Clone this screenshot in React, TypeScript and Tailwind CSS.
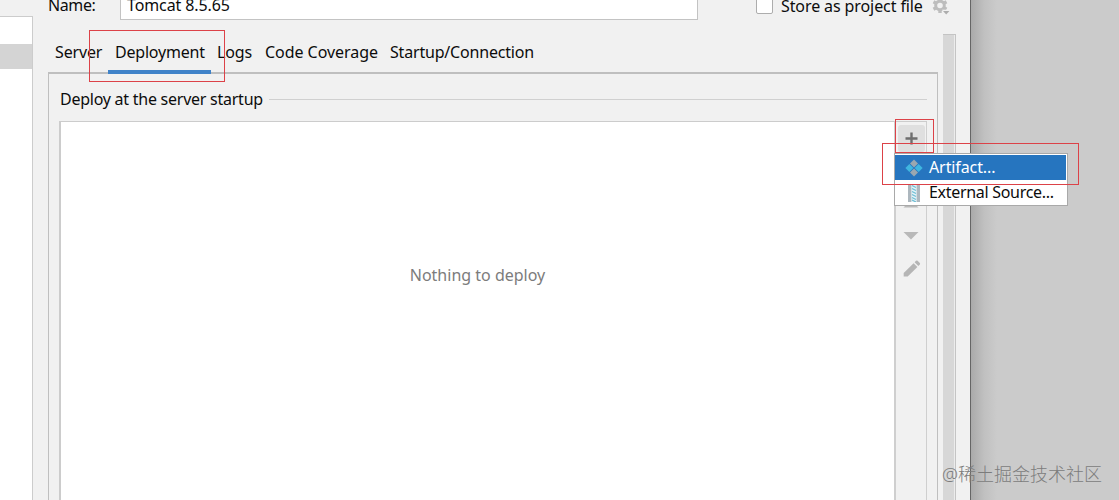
import { useState } from 'react'

type Tab = {
  label: string
  className: string
}

const TABS: Tab[] = [
  { label: 'Server', className: 'w-[60px] pl-[7px] tracking-[-0.15px]' },
  { label: 'Deployment', className: 'w-[103px] pl-[7px] tracking-[-0.2px]' },
  { label: 'Logs', className: 'w-[47px] pl-[6px] tracking-[-0.1px]' },
  { label: 'Code Coverage', className: 'w-[126px] pl-[7px] tracking-[-0.05px]' },
  { label: 'Startup/Connection', className: 'w-[160px] pl-[6px] tracking-[-0.19px]' },
]

function GearIcon() {
  return (
    <svg className="ml-[9px] mt-[-4px] h-[20px] w-[18px]" viewBox="0 0 18 20" fill="none">
      <circle cx="8" cy="9.5" r="4.3" stroke="#bdbdbd" strokeWidth="3" />
      <path
        d="M8 2v3M8 14v3M1.5 5.8l2.6 1.4M11.9 11.8l2.6 1.4M1.5 13.2l2.6-1.4M11.9 7.2l2.6-1.4"
        stroke="#bdbdbd"
        strokeWidth="3.4"
      />
      <path d="M10 13.8h8v5h-4z" fill="#f1f1f1" />
      <path d="M11 15h6.4l-3.2 3.4z" fill="#adadad" />
    </svg>
  )
}

function ArtifactIcon() {
  return (
    <svg className="h-[18px] w-[18px]" viewBox="0 0 18 18">
      <path d="M9 0.4l4 4-4 4-4-4z" fill="#9aa7b0" />
      <path d="M4.4 5l4 4-4 4-4-4z" fill="#40b6e0" />
      <path d="M13.6 5l4 4-4 4-4-4z" fill="#40b6e0" />
      <path d="M9 9.6l4 4-4 4-4-4z" fill="#9aa7b0" />
    </svg>
  )
}

function ExternalSourceIcon() {
  return (
    <svg className="h-[18px] w-[18px]" viewBox="0 0 18 18">
      <path d="M3 0h3.6v18H3zM11.4 0H15v18h-3.6z" fill="#adb7be" />
      <path d="M6.6 0h4.8v18H6.6z" fill="#e3f2f7" />
      <path
        d="M7 1.5l4 2M7 4.5l4 2M7 7.5l4 2M7 10.5l4 2M7 13.5l4 2M7 16l4 2"
        stroke="#6dbdd4"
        strokeWidth="1.3"
      />
    </svg>
  )
}

function DeployToolbar() {
  return (
    <div className="flex w-[33px] flex-col items-center border-l-2 border-r border-[#cfcfcf] bg-[#f1f1f1] pt-[3px]">
      <button className="flex h-[27px] w-[27px] items-center justify-center rounded-[3px] bg-[#dfdfdf]" aria-label="Add">
        <svg className="h-[13px] w-[13px]" viewBox="0 0 13 13">
          <path d="M6.5 0.5v12M0.5 6.5h12" stroke="#6e6e6e" strokeWidth="2.4" />
        </svg>
      </button>
      <svg className="mt-[48px] h-[8px] w-[16px]" viewBox="0 0 16 8">
        <path d="M0.5 7.5h15L8 0z" fill="#b9b9b9" />
      </svg>
      <svg className="mt-[24px] h-[8px] w-[16px]" viewBox="0 0 16 8">
        <path d="M0.5 0h15L8 7.5z" fill="#b9b9b9" />
      </svg>
      <svg className="mt-[20px] ml-px h-[18px] w-[18px]" viewBox="0 0 18 18" fill="#b5b5b5">
        <path d="M0.7 13L10.6 3.2l3.8 3.8L4.7 16.6H0.7z" />
        <path d="M11.6 2.2l1.4-1.4q0.8-0.6 1.6 0l2.2 2.2q0.7 0.8 0 1.6l-1.4 1.4z" />
      </svg>
    </div>
  )
}

function AddMenu() {
  return (
    <div className="absolute left-[894px] top-[153px] h-[53px] w-[174px] border border-[#a9a9a9] bg-white pt-px pr-px">
      <div className="flex h-[25px] items-center bg-[#2675bf] pl-[10px] text-white">
        <ArtifactIcon />
        <span className="ml-[6px] mt-[-2px] tracking-[-0.1px]">Artifact...</span>
      </div>
      <div className="flex h-[25px] items-center pl-[10px]">
        <ExternalSourceIcon />
        <span className="ml-[6px] mt-[-2px] tracking-[-0.3px]">External Source...</span>
      </div>
    </div>
  )
}

export default function App() {
  const [active, setActive] = useState('Deployment')

  return (
    <div className="relative flex h-[500px] w-[1119px] overflow-hidden whitespace-nowrap bg-[#cbcbcb] font-['Noto_Sans','Noto_Sans_CJK_SC',sans-serif] text-[16px] leading-[22px] text-[#0c0c0c]">
      {/* Configuration list */}
      <div className="flex w-[33px] flex-col bg-[#f1f1f1] pt-[16px]">
        <div className="flex-1 border-t border-r border-[#cccccc] bg-white pt-[27px]">
          <div className="h-[25px] bg-[#d4d4d4]" />
        </div>
      </div>

      {/* Settings */}
      <div className="flex w-[938px] flex-col border-r border-[#666666] bg-[#f1f1f1] pl-[15px]">
        <div className="flex h-[34px]">
          <span className="mt-[-6px] w-[72px] tracking-[-0.4px]">Name:</span>
          <div className="h-[20px] w-[578px] border-x border-b border-[#c3c3c3] bg-white pl-[6px]">
            <div className="mt-[-6px] tracking-[-0.1px]">Tomcat 8.5.65</div>
          </div>
          <div className="ml-[58px] mt-[-4px] h-[18px] w-[17px] rounded-[2px] border border-[#adadad] bg-white" />
          <span className="ml-[8px] mt-[-5px] w-[142px] tracking-[-0.1px]">Store as project file</span>
          <GearIcon />
        </div>

        <div className="flex flex-1">
          <div className="flex w-[890px] flex-col">
            <div className="flex h-[38px]">
              {TABS.map(tab => (
                <button
                  key={tab.label}
                  onClick={() => setActive(tab.label)}
                  className={`relative z-10 flex h-[40px] items-start pt-[7px] text-left ${tab.className} ${
                    tab.label === active ? 'border-b-4 border-[#4083c9]' : ''
                  }`}
                >
                  {tab.label}
                </button>
              ))}
            </div>
            <div className="flex flex-1 flex-col border-x border-t-2 border-[#bfbfbf] pt-[14px] pr-[10px] pl-[10px]">
              <div className="flex h-[22px] items-center pl-px">
                <span className="w-[209px] tracking-[-0.25px]">Deploy at the server startup</span>
                <div className="h-px flex-1 bg-[#d0d0d0]" />
              </div>
              <div className="mt-[11px] flex flex-1 border-t border-l-2 border-[#cccccc]">
                <div className="flex-1 bg-white pt-[142px] text-center text-[#7c7c7c]">Nothing to deploy</div>
                <DeployToolbar />
              </div>
            </div>
          </div>
          {/* Scrollbar */}
          <div className="ml-[5px] w-[13px] border-t border-r border-[#c4c4c4] bg-[#d7d7d7]">
            <div className="ml-auto h-full w-px bg-[#ececec]" />
          </div>
        </div>
      </div>

      {/* Dialog shadow */}
      <div className="w-[26px] bg-linear-to-r from-[#aaaaaa] via-[#c0c0c0] to-[#cbcbcb]" />

      <AddMenu />

      {/* Highlight boxes */}
      <div className="absolute left-[89px] top-[30px] z-20 h-[52px] w-[136px] border border-[#dc4248]" />
      <div className="absolute left-[895px] top-[119px] z-20 h-[34px] w-[39px] border border-[#dc4248]" />
      <div className="absolute left-[882px] top-[143px] z-20 h-[42px] w-[197px] border border-[#dc4248]" />

      <div className="absolute left-[942px] top-[461px] text-[18px] leading-[26px] font-light text-[#7c7c7c]">
        @稀土掘金技术社区
      </div>
    </div>
  )
}
